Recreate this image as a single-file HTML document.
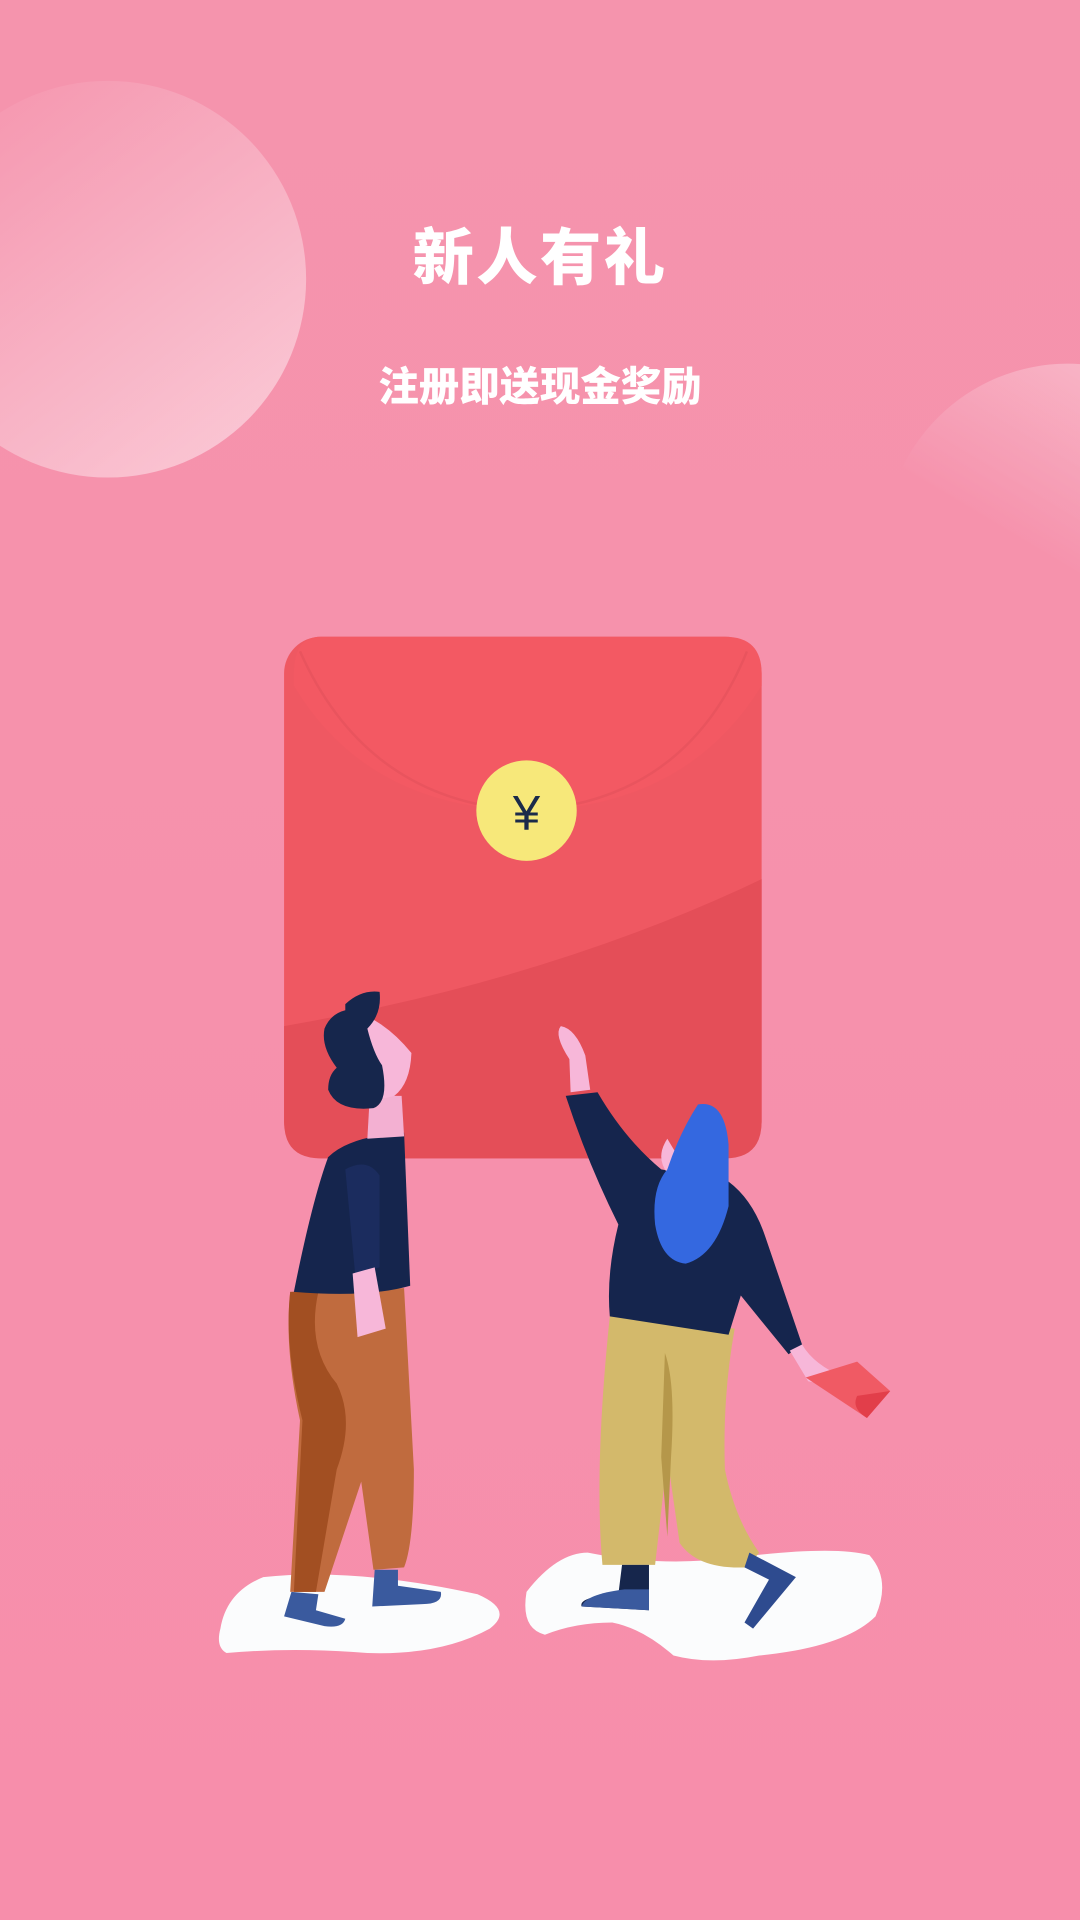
<!DOCTYPE html>
<html><head><meta charset="utf-8"><style>
html,body{margin:0;padding:0;width:1080px;height:1920px;overflow:hidden;background:#f68fa9}
svg{display:block}
</style></head><body>
<svg width="1080" height="1920" viewBox="0 0 882 1568" xmlns="http://www.w3.org/2000/svg">
<defs>
<linearGradient id="bg" x1="0" y1="0" x2="0" y2="1"><stop offset="0" stop-color="#f594ad"/><stop offset="1" stop-color="#f78eab"/></linearGradient>
<linearGradient id="c1" x1="0.1" y1="0" x2="0.8" y2="0.9"><stop offset="0" stop-color="#fff" stop-opacity="0"/><stop offset="1" stop-color="#fff" stop-opacity="0.45"/></linearGradient>
<linearGradient id="c2" x1="0.7" y1="0" x2="0.4" y2="0.5"><stop offset="0" stop-color="#fff" stop-opacity="0.35"/><stop offset="1" stop-color="#fff" stop-opacity="0"/></linearGradient>
</defs>
<rect width="882" height="1568" fill="url(#bg)"/>
<circle cx="88" cy="228" r="162" fill="url(#c1)"/>
<circle cx="872" cy="447" r="150" fill="url(#c2)"/>
<text x="441" y="228" text-anchor="middle" font-family="'Liberation Sans','Noto Sans CJK SC',sans-serif" font-weight="900" font-size="50" fill="#fff" letter-spacing="2">新人有礼</text>
<text x="441" y="327" text-anchor="middle" font-family="'Liberation Sans','Noto Sans CJK SC',sans-serif" font-weight="900" font-size="33" fill="#fff">注册即送现金奖励</text>
<!-- envelope -->
<rect x="232" y="520" width="390" height="426" rx="30" fill="#ef5862"/>
<path d="M262 520 H592 Q622 520 622 550 V560 Q560 660 430 662 Q300 660 240 560 V550 Q240 520 262 520Z" fill="#f35963"/>
<path d="M245 532 Q300 655 430 662 Q560 655 610 532" fill="none" stroke="#e9545e" stroke-width="2"/>
<path d="M232 838 Q450 800 622 718 V916 Q622 946 592 946 H262 Q232 946 232 916Z" fill="#e44e58"/>
<circle cx="430" cy="662" r="41" fill="#f7e87a"/>
<text x="430" y="678" text-anchor="middle" font-family="'Liberation Sans',sans-serif" font-size="40" fill="#1b2a4a">¥</text>
<!-- clouds -->
<path d="M180 1330 Q185 1300 215 1288 Q290 1280 390 1302 Q420 1315 400 1330 Q360 1352 300 1350 Q240 1345 185 1350 Q176 1345 180 1330Z" fill="#fbfcfd"/>
<path d="M430 1300 Q455 1268 480 1268 Q540 1280 600 1272 Q680 1262 710 1270 Q728 1290 715 1320 Q690 1345 620 1352 Q580 1360 550 1352 Q525 1330 500 1325 Q470 1325 445 1335 Q425 1330 430 1300Z" fill="#fbfcfd"/>
<!-- man -->
<path d="M237 1055 L330 1052 L338 1200 Q338 1260 330 1280 L305 1282 L295 1210 L265 1300 L237 1300 L245 1160 Q232 1100 237 1055Z" fill="#c06b3e"/>
<path d="M237 1055 L260 1055 Q250 1100 275 1130 Q290 1160 275 1200 L258 1300 L240 1300 L247 1160 Q232 1100 237 1055Z" fill="#a24f22"/>
<path d="M238 1300 L260 1302 L258 1315 L282 1322 Q280 1330 265 1328 L232 1320Z" fill="#3a5a9e"/>
<path d="M306 1282 L325 1282 L325 1295 L360 1300 Q362 1310 345 1310 L304 1312Z" fill="#3a5a9e"/>
<path d="M240 1055 Q255 980 268 945 Q285 928 330 925 L335 1050 Q300 1060 240 1055Z" fill="#15254d"/>
<path d="M282 955 Q300 945 310 960 L310 1035 L290 1040 Z" fill="#1b2c5e"/>
<path d="M288 1040 L306 1035 L315 1085 L292 1092 Z" fill="#f7b7d9"/>
<path d="M302 895 L328 895 L330 928 L300 930Z" fill="#f3b0d2"/>
<path d="M300 830 Q320 840 336 860 Q335 885 322 895 L300 900 Q290 870 300 830Z" fill="#f7b7d9"/>
<path d="M282 820 Q295 808 310 810 Q312 828 300 840 Q305 860 312 870 Q318 900 305 905 Q275 908 268 890 Q268 878 275 872 Q262 855 265 840 Q270 828 282 825Z" fill="#16264c"/>
<!-- woman -->
<path d="M498 1075 L600 1085 Q590 1140 592 1200 Q600 1240 620 1268 L610 1280 Q570 1282 555 1260 L545 1190 L535 1278 L492 1278 Q485 1200 498 1075Z" fill="#d3b96b"/>
<path d="M543 1105 Q552 1130 548 1190 L545 1255 L540 1190Z" fill="#b5974a"/>
<path d="M508 1278 L530 1278 L530 1315 L475 1312 Q472 1304 505 1302Z" fill="#16264c"/>
<path d="M510 1298 L530 1298 L530 1315 L475 1312 Q478 1302 510 1298Z" fill="#3a5a9e"/>
<path d="M612 1268 L650 1288 L615 1330 L608 1325 L628 1290 L608 1280Z" fill="#2e4b8f"/>
<path d="M462 895 L488 892 Q510 930 540 955 L595 965 Q615 980 625 1010 L655 1098 L644 1106 L605 1058 L595 1090 L498 1075 Q495 1040 505 1000 Q480 950 462 895Z" fill="#15254d"/>
<path d="M645 1103 L655 1098 Q665 1115 690 1125 L685 1133 L660 1128Z" fill="#f7b7d9"/>
<path d="M658 1125 L700 1112 L727 1136 L708 1158Z" fill="#f05a64"/>
<path d="M700 1140 L727 1136 L708 1158 Q695 1150 700 1140Z" fill="#e23e4a"/>
<path d="M466 892 L482 890 L478 862 Q470 840 458 838 Q452 845 465 865Z" fill="#f7b7d9"/>
<path d="M545 930 Q535 945 545 958 L560 955 Z" fill="#f7b7d9"/>
<path d="M570 902 Q592 898 595 935 L595 985 Q585 1025 560 1032 Q540 1030 535 1000 Q532 970 545 955 Q555 925 570 902Z" fill="#3468e0"/>
</svg>
</body></html>
